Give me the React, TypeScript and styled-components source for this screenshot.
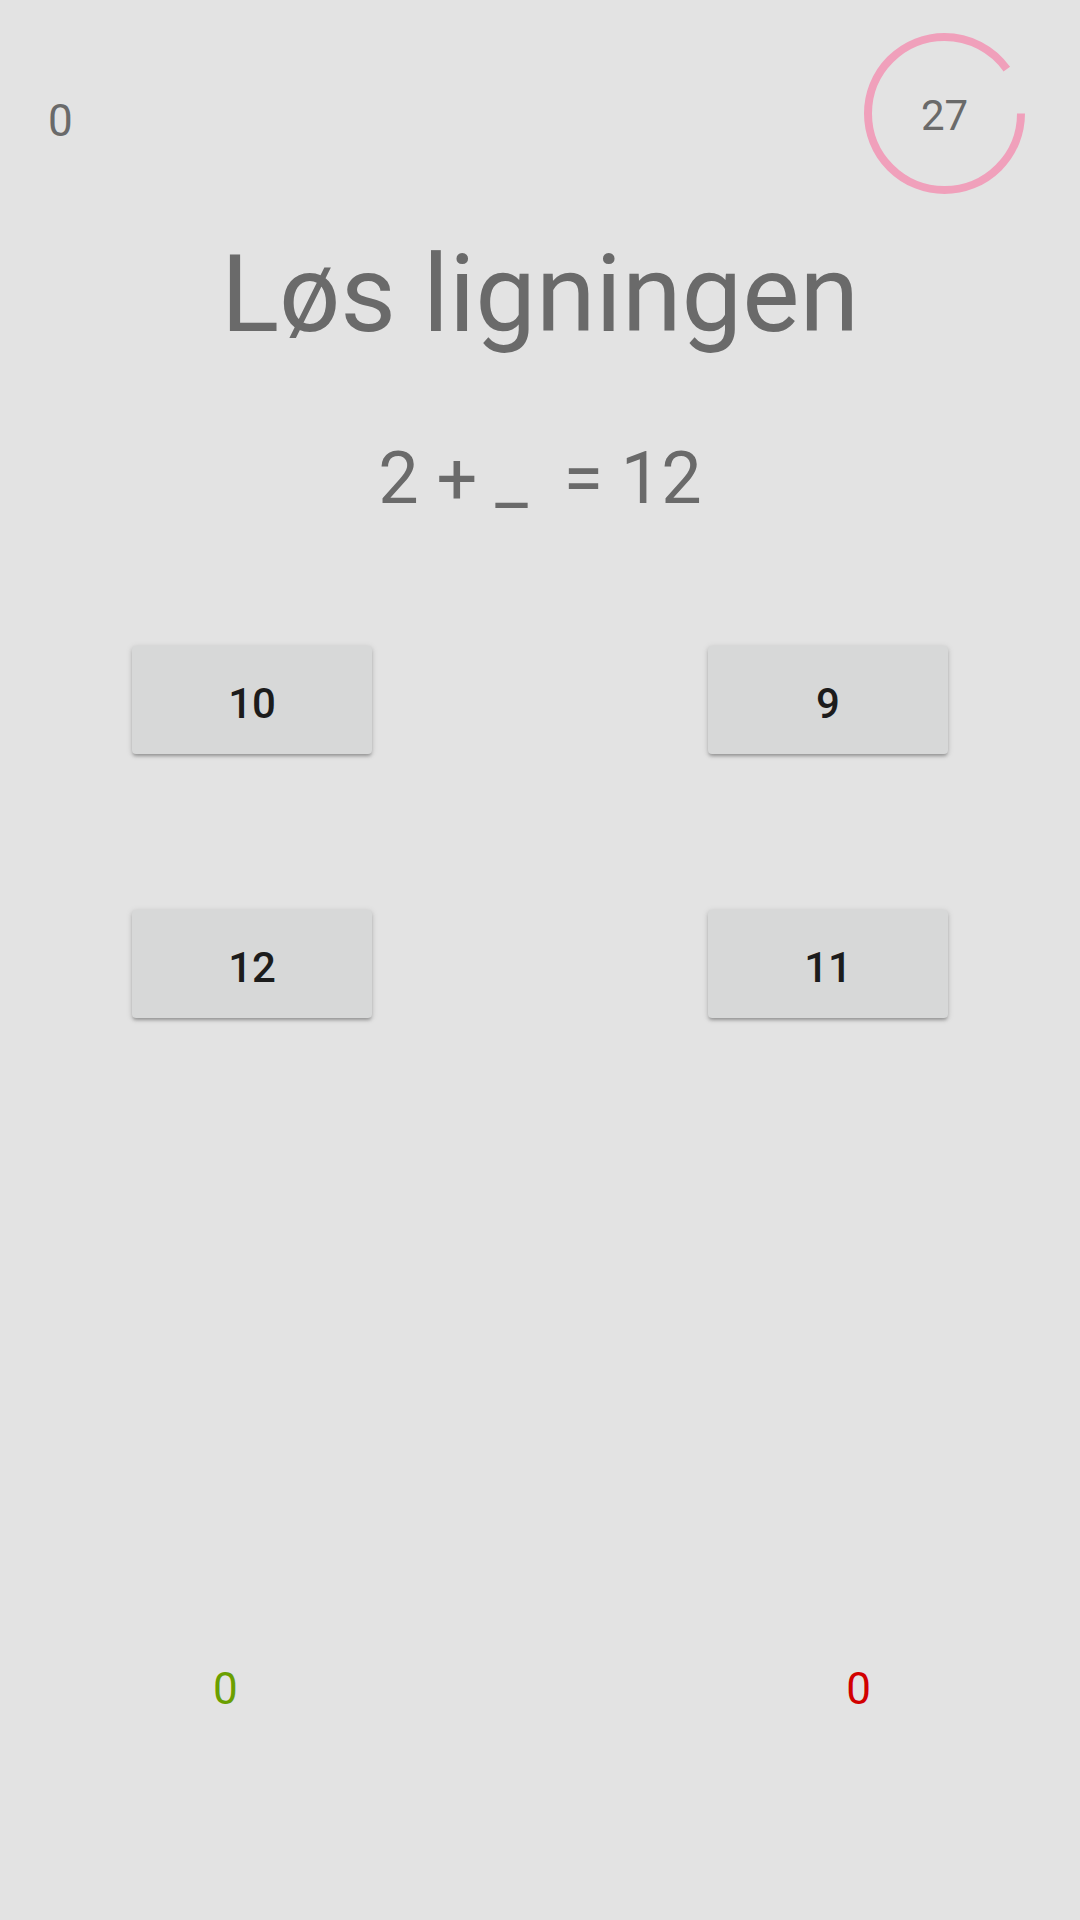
import React from "react";
import styled, { createGlobalStyle } from "styled-components";

const GlobalStyle = createGlobalStyle`
  html, body {
    margin: 0;
    padding: 0;
    background: #e3e3e3;
  }
  body {
    font-family: Roboto, "Noto Sans", "Liberation Sans", sans-serif;
    -webkit-font-smoothing: antialiased;
  }
`;

const Screen = styled.div`
  width: 1080px;
  min-height: 1920px;
  box-sizing: border-box;
  padding-top: 33px;
  background: #e3e3e3;
  display: flex;
  flex-direction: column;
  align-items: stretch;
`;

const Header = styled.header`
  display: flex;
  justify-content: space-between;
  align-items: flex-start;
  padding: 0 55px 0 48px;
  height: 161px;
`;

const Counter = styled.div`
  margin-top: 66px;
  font-size: 44px;
  line-height: 1;
  color: #6a6a6a;
`;

const Timer = styled.div`
  position: relative;
  width: 161px;
  height: 161px;
  display: flex;
  align-items: center;
  justify-content: center;
`;

const TimerRing = styled.svg`
  position: absolute;
  inset: 0;
`;

const TimerValue = styled.span`
  position: relative;
  font-size: 42px;
  line-height: 1;
  color: #6a6a6a;
  margin-top: 4px;
`;

const Title = styled.h1`
  margin: 46px 0 0;
  font-weight: 400;
  font-size: 108px;
  line-height: 1;
  text-align: center;
  color: #6a6a6a;
`;

const Equation = styled.div`
  margin-top: 95px;
  font-size: 72px;
  line-height: 1;
  text-align: center;
  white-space: pre;
  color: #6a6a6a;
`;

const Answers = styled.div`
  margin-top: 131px;
  padding: 0 132px;
  display: grid;
  grid-template-columns: 240px 240px;
  justify-content: space-between;
  row-gap: 156px;
`;

const AnswerButton = styled.button`
  height: 108px;
  border: none;
  border-radius: 4px;
  background: #d7d8d8;
  color: #1c1c1c;
  font-family: Roboto, "Noto Sans", sans-serif;
  font-weight: 500;
  font-size: 42px;
  line-height: 1;
  display: flex;
  align-items: center;
  justify-content: center;
  padding: 7px 0 0;
  box-sizing: border-box;
  box-shadow: 0px 3px 3px -1px rgba(0, 0, 0, 0.2),
    0px 2px 4px 0px rgba(0, 0, 0, 0.12), 0px 1px 7px 0px rgba(0, 0, 0, 0.1);
  cursor: pointer;
`;

const Scores = styled.footer`
  margin-top: 649px;
  padding: 0 209px 0 213px;
  display: flex;
  justify-content: space-between;
`;

const Score = styled.span<{ $tone: "good" | "bad" }>`
  font-size: 44px;
  line-height: 1;
  color: ${(p) => (p.$tone === "good" ? "#6a9f00" : "#d20000")};
`;

const RING_R = 76.5;
const CIRC = 2 * Math.PI * RING_R;

export default function App() {
  const timeLeft = 27;
  const total = 30;
  const frac = timeLeft / total;
  const answers = [10, 9, 12, 11];

  return (
    <>
      <GlobalStyle />
      <Screen>
        <Header>
          <Counter>0</Counter>
          <Timer>
            <TimerRing width="161" height="161" viewBox="0 0 161 161">
              <circle
                cx="80.5"
                cy="80.5"
                r={RING_R}
                fill="none"
                stroke="#f0a0bb"
                strokeWidth="8"
                strokeDasharray={`${CIRC * frac} ${CIRC}`}
              />
            </TimerRing>
            <TimerValue>{timeLeft}</TimerValue>
          </Timer>
        </Header>
        <Title>Løs ligningen</Title>
        <Equation>{"2 + _  = 12"}</Equation>
        <Answers>
          {answers.map((a) => (
            <AnswerButton key={a}>{a}</AnswerButton>
          ))}
        </Answers>
        <Scores>
          <Score $tone="good">0</Score>
          <Score $tone="bad">0</Score>
        </Scores>
      </Screen>
    </>
  );
}
